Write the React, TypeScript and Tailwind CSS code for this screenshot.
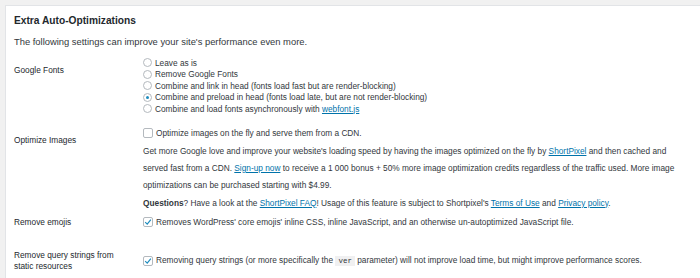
import React from "react";

function Radio({ checked, children }: { checked?: boolean; children: React.ReactNode }) {
  return (
    <label className="flex items-center h-[11.5px] gap-[3px] whitespace-nowrap">
      <span className="relative w-[9px] h-[9px] rounded-full border border-[#b4b9be] bg-white shrink-0">
        {checked && (
          <span className="absolute left-[2px] top-[2px] w-[3px] h-[3px] rounded-full bg-[#1e8cbe]"></span>
        )}
      </span>
      <span>{children}</span>
    </label>
  );
}

function Checkbox({ checked }: { checked?: boolean }) {
  return (
    <span className="flex items-center justify-center w-[10px] h-[10px] rounded-[2px] border border-[#b4b9be] bg-white shrink-0">
      {checked && (
        <svg viewBox="0 0 10 10" className="w-[8px] h-[8px]">
          <path d="M1.5 5.2 L4 7.6 L8.6 2" fill="none" stroke="#1e8cbe" strokeWidth="1.5" />
        </svg>
      )}
    </span>
  );
}

const link = "text-[#0073aa] underline";

export default function App() {
  return (
    <main className="min-h-screen bg-[#f1f1f1] pl-[5px] pt-[5px] font-['Liberation_Sans',Arial,sans-serif] text-[#32373c] overflow-hidden">
      <div className="bg-white border-t border-l border-[#e2e4e7] pl-[8px] pt-[8px] min-h-[280px]">
        {/* header */}
        <h2 className="text-[10.2px] leading-[14px] font-bold text-[#23282d]">Extra Auto-Optimizations</h2>
        <p className="mt-[7px] text-[9.4px] leading-[14px]">
          The following settings can improve your site's performance even more.
        </p>

        {/* Google Fonts */}
        <div className="flex items-start text-[8.3px] pt-[8px]">
          <div className="w-[129px] pt-[7px] leading-[12px] text-[#23282d]">Google Fonts</div>
          <div className="flex flex-col">
            <Radio>Leave as is</Radio>
            <Radio>Remove Google Fonts</Radio>
            <Radio>Combine and link in head (fonts load fast but are render-blocking)</Radio>
            <Radio checked>Combine and preload in head (fonts load late, but are not render-blocking)</Radio>
            <Radio>
              Combine and load fonts asynchronously with <a className={link}>webfont.js</a>
            </Radio>
          </div>
        </div>

        {/* Optimize Images */}
        <div className="flex items-start text-[8.3px] pt-[10px]">
          <div className="w-[129px] pt-[9.5px] leading-[12px] text-[#23282d]">Optimize Images</div>
          <div className="leading-[17px]">
            <div className="flex items-center gap-[3px] h-[17px]">
              <Checkbox />
              <span>Optimize images on the fly and serve them from a CDN.</span>
            </div>
            <p className="mt-[1px] whitespace-nowrap">
              Get more Google love and improve your website's loading speed by having the images optimized on the fly by{" "}
              <a className={link}>ShortPixel</a> and then cached and
              <br />
              served fast from a CDN. <a className={link}>Sign-up now</a> to receive a 1 000 bonus + 50% more image
              optimization credits regardless of the traffic used. More image
              <br />
              optimizations can be purchased starting with $4.99.
            </p>
            <p className="mt-[1px] whitespace-nowrap">
              <strong>Questions</strong>? Have a look at the <a className={link}>ShortPixel FAQ</a>! Usage of this feature
              is subject to Shortpixel's <a className={link}>Terms of Use</a> and <a className={link}>Privacy policy</a>.
            </p>
          </div>
        </div>

        {/* Remove emojis */}
        <div className="flex items-center text-[8.3px] h-[17px] mt-[2px]">
          <div className="w-[129px] leading-[12px] text-[#23282d]">Remove emojis</div>
          <div className="flex items-center gap-[3px] whitespace-nowrap">
            <Checkbox checked />
            <span>
              Removes WordPress' core emojis' inline CSS, inline JavaScript, and an otherwise un-autoptimized JavaScript
              file.
            </span>
          </div>
        </div>

        {/* Remove query strings */}
        <div className="flex items-center text-[8.3px] mt-[19px]">
          <div className="w-[129px] leading-[11px] text-[#23282d]">
            Remove query strings from
            <br />
            static resources
          </div>
          <div className="flex items-center gap-[3px] whitespace-nowrap">
            <Checkbox checked />
            <span>
              Removing query strings (or more specifically the{" "}
              <code className="bg-[#f0f0f1] px-[3px] py-[1px] font-['Liberation_Mono',monospace] text-[7.5px]">ver</code>{" "}
              parameter) will not improve load time, but might improve performance scores.
            </span>
          </div>
        </div>
      </div>
    </main>
  );
}
